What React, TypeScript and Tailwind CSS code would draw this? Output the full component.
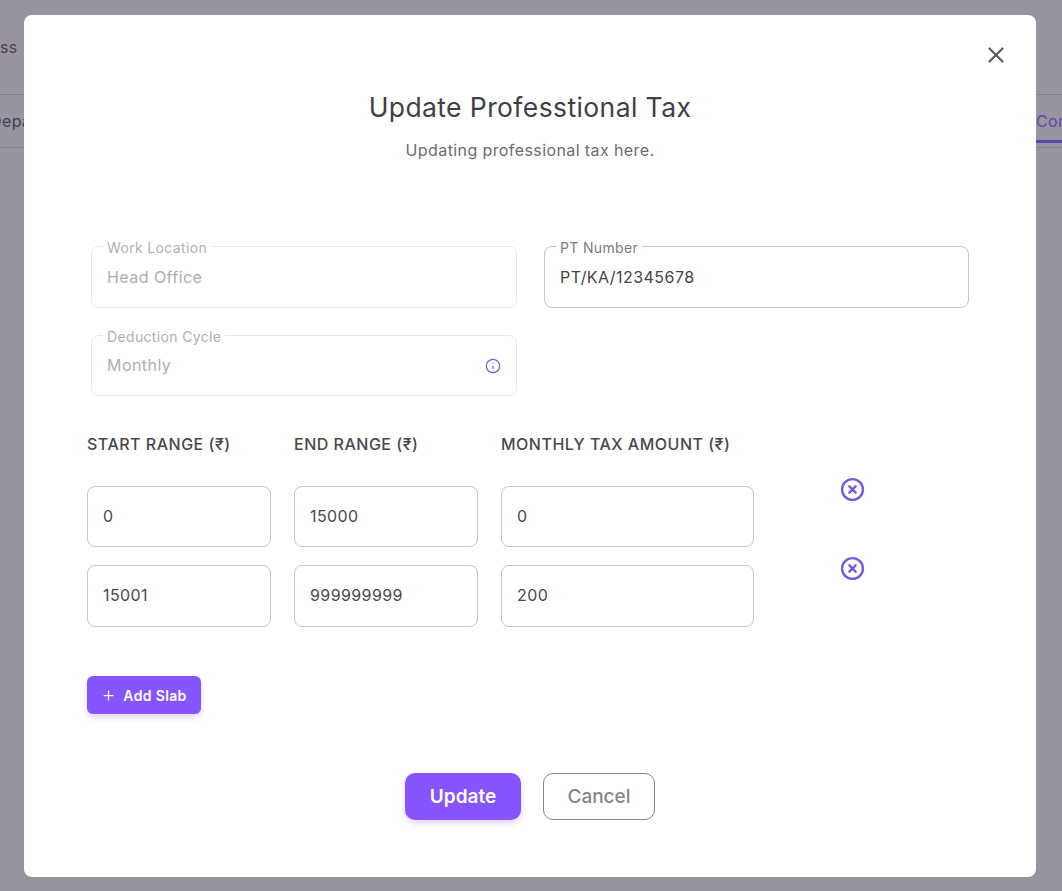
import React from "react";
import { X, Plus, Info, CircleX } from "lucide-react";

function Floating({ label, value, disabled, icon, width, height }: { label: string; value: string; disabled?: boolean; icon?: boolean; width: string; height: string }) {
  return (
    <div className={`relative flex items-center justify-between rounded-lg border pl-[15px] pr-[15px] text-[16px] tracking-[0.45px] ${width} ${height} ${disabled ? "border-[#e8e8ea] text-[#adadb2]" : "border-[#c6c6ca] text-[#434349]"}`}>
      <span className="mt-[-1px] leading-6">{value}</span>
      {icon && <Info size={16} strokeWidth={1.75} className="text-[#7a5ad6]" />}
      <span className={`absolute left-[11px] top-[-7px] bg-white px-1 text-[14px] leading-4 tracking-[0.35px] ${disabled ? "text-[#b0b0b4]" : "text-[#7c7c82]"}`}>{label}</span>
    </div>
  );
}

function Cell({ value, wide, height, offset }: { value: string; wide?: boolean; height: string; offset: string }) {
  return (
    <div className={`flex items-center rounded-lg border border-[#c6c6ca] pl-[15px] text-[16px] tracking-wide text-[#48484e] ${height} ${wide ? "w-[253px]" : "w-[184px]"}`}>
      <span className={offset}>{value}</span>
    </div>
  );
}

function Row({ a, b, c, height, offset }: { a: string; b: string; c: string; height: string; offset: string }) {
  return (
    <div className="flex gap-[23px]">
      <Cell value={a} height={height} offset={offset} />
      <Cell value={b} height={height} offset={offset} />
      <Cell value={c} height={height} offset={offset} wide />
      <CircleX size={25} strokeWidth={2.3} className="ml-[63px] mt-[-9px] text-[#7a5ad6]" />
    </div>
  );
}

export default function App() {
  return (
    <div className="relative h-[891px] w-[1062px] overflow-hidden bg-[#97949f] font-['Inter','Liberation_Sans',sans-serif]">
      <div className="h-[95px] border-b border-[#85828e] pt-[35px] text-[16px] leading-6 tracking-wide text-[#45414f]">ss</div>
      <div className="flex h-[53px] items-center justify-between border-b border-[#85828e] pb-[4px] text-[16px] tracking-wide text-[#45414f]">
        <span className="ml-[-10px] pt-[4px]">Department</span>
        <span className="flex h-[48px] w-[26px] items-center overflow-hidden border-b-[3px] border-[#5f47ad] pt-[7px] text-[#5f47ad]">Compliance</span>
      </div>

      <div className="absolute left-[24px] top-[15px] h-[862px] w-[1012px] rounded-lg bg-white">
        <button className="absolute right-[27px] top-[27px] text-[#5b5b60]">
          <X size={26} strokeWidth={2} />
        </button>

        <div className="flex flex-col items-center pt-[74px] tracking-wide">
          <h2 className="text-[26.5px] leading-9 font-normal text-[#3f3f47]">Update Professtional Tax</h2>
          <p className="mt-[13px] text-[16px] leading-6 text-[#6c6c72]">Updating professional tax here.</p>
        </div>

        <div className="mt-[84px] pl-[67px]">
          <div className="flex gap-[27px]">
            <Floating label="Work Location" value="Head Office" width="w-[426px]" height="h-[62px]" disabled />
            <Floating label="PT Number" value="PT/KA/12345678" width="w-[425px]" height="h-[62px]" />
          </div>
          <div className="mt-[27px]">
            <Floating label="Deduction Cycle" value="Monthly" width="w-[426px]" height="h-[61px]" disabled icon />
          </div>
        </div>

        <div className="mt-[36px] pl-[63px]">
          <div className="flex gap-[23px] text-[16px] leading-6 font-medium tracking-[0.5px] text-[#48484e]">
            <span className="w-[184px]">START RANGE (₹)</span>
            <span className="w-[184px]">END RANGE (₹)</span>
            <span className="w-[253px]">MONTHLY TAX AMOUNT (₹)</span>
          </div>
          <div className="mt-[30px] flex flex-col gap-[18px]">
            <Row a="0" b="15000" c="0" height="h-[61px]" offset="mt-[-1px]" />
            <Row a="15001" b="999999999" c="200" height="h-[62px]" offset="mt-[-3px]" />
          </div>
          <button className="mt-[49px] flex h-[38px] w-[114px] items-center justify-center gap-[7px] rounded-md bg-[#8655fd] text-[14px] font-semibold tracking-wide text-white shadow-[0_3px_6px_rgba(134,85,253,0.25)]">
            <Plus size={15} strokeWidth={2} />
            Add Slab
          </button>
        </div>

        <div className="mt-[59px] flex justify-center gap-[22px]">
          <button className="h-[47px] w-[116px] rounded-[10px] bg-[#8655fd] pt-[2px] text-[19px] font-semibold text-white shadow-[0_3px_6px_rgba(134,85,253,0.25)]">Update</button>
          <button className="h-[47px] w-[112px] rounded-[10px] border border-[#85858a] pt-[1px] text-[19px] font-medium text-[#85858a]">Cancel</button>
        </div>
      </div>
    </div>
  );
}
